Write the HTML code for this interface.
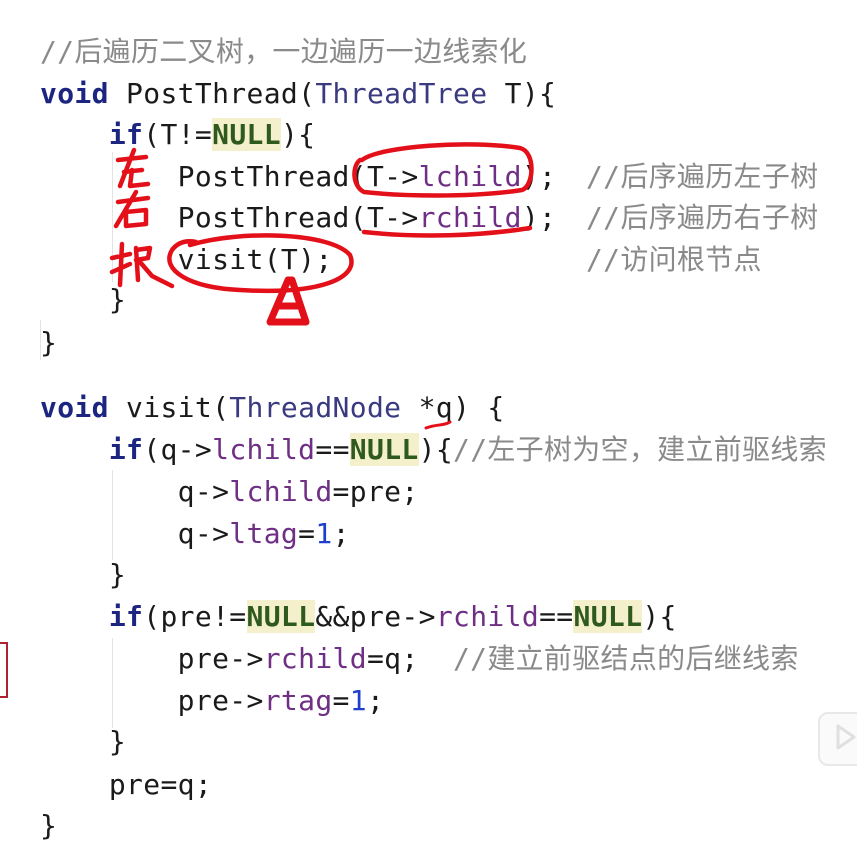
<!DOCTYPE html>
<html><head><meta charset="utf-8"><style>
html,body{margin:0;padding:0;background:#fff;width:857px;height:857px;overflow:hidden;position:relative}
.l{position:absolute;left:40px;height:42px;line-height:42px;font-family:"DejaVu Sans Mono","Liberation Mono","Noto Sans CJK SC",monospace;font-size:28px;color:#1a1a1a;white-space:pre;letter-spacing:0.35px}
.k{color:#1c2580;font-weight:bold}
.t{color:#3a3a80}
.f{color:#6e2f84}
.n{color:#2f5a1e;font-weight:bold;background:#f4f0cc}
.d{color:#1d3fcc}
.c{color:#8a8a8a;font-family:"DejaVu Sans Mono","Noto Sans CJK SC",monospace;letter-spacing:0.3px}
.g{position:absolute;width:1px;background:#e4e4e4}
</style></head><body>
<div class="g" style="left:112px;top:152px;height:130px"></div>
<div class="g" style="left:112px;top:470px;height:90px"></div>
<div class="g" style="left:112px;top:638px;height:90px"></div>
<div class="g" style="left:40px;top:320px;height:40px"></div>

<div class="l c" style="top:31px">//后遍历二叉树，一边遍历一边线索化</div>
<div class="l" style="top:73px"><span class="k">void</span> PostThread(<span class="t">ThreadTree</span> T){</div>
<div class="l" style="top:114px">    <span class="k">if</span>(T!=<span class="n">NULL</span>){</div>
<div class="l" style="top:156px">        PostThread(T-&gt;<span class="f">lchild</span>);</div>
<div class="l c" style="top:156px;left:586px">//后序遍历左子树</div>
<div class="l" style="top:197px">        PostThread(T-&gt;<span class="f">rchild</span>);</div>
<div class="l c" style="top:197px;left:586px">//后序遍历右子树</div>
<div class="l" style="top:239px">        visit(T);</div>
<div class="l c" style="top:239px;left:586px">//访问根节点</div>
<div class="l" style="top:279px">    }</div>
<div class="l" style="top:322px">}</div>

<div class="l" style="top:387px"><span class="k">void</span> visit(<span class="t">ThreadNode</span> *q) {</div>
<div class="l" style="top:429px">    <span class="k">if</span>(q-&gt;<span class="f">lchild</span>==<span class="n">NULL</span>){<span class="c">//左子树为空，建立前驱线索</span></div>
<div class="l" style="top:471px">        q-&gt;<span class="f">lchild</span>=pre;</div>
<div class="l" style="top:513px">        q-&gt;<span class="f">ltag</span>=<span class="d">1</span>;</div>
<div class="l" style="top:554px">    }</div>
<div class="l" style="top:596px">    <span class="k">if</span>(pre!=<span class="n">NULL</span>&amp;&amp;pre-&gt;<span class="f">rchild</span>==<span class="n">NULL</span>){</div>
<div class="l" style="top:638px">        pre-&gt;<span class="f">rchild</span>=q;  <span class="c">//建立前驱结点的后继线索</span></div>
<div class="l" style="top:680px">        pre-&gt;<span class="f">rtag</span>=<span class="d">1</span>;</div>
<div class="l" style="top:721px">    }</div>
<div class="l" style="top:764px">    pre=q;</div>
<div class="l" style="top:805px">}</div>

<div style="position:absolute;left:-4px;top:642px;width:8px;height:52px;border:2px solid #b02030"></div>
<div style="position:absolute;left:818px;top:712px;width:50px;height:50px;border:2px solid #e8e8e8;border-radius:10px;background:#fafafa"></div>
<svg style="position:absolute;left:836px;top:724px" width="21" height="26"><path d="M2 2 L18 13 L2 24Z" fill="none" stroke="#e0e0e0" stroke-width="3" stroke-linejoin="round"/></svg>

<svg style="position:absolute;left:0;top:0" width="857" height="857" fill="none" stroke="#e3101a" stroke-width="4.5" stroke-linecap="round" stroke-linejoin="round">
<path d="M118 160 L146 157 M134 150 L120 186 M124 172 L142 170 M132 170 L130 186 L148 184"/>
<path d="M118 202 L148 198 M136 192 L116 226 M126 212 L146 210 L146 224 L126 226 Z"/>
<path d="M112 258 L130 254 M122 244 L120 285 M112 272 L130 264 M136 250 L150 248 L148 258 L136 260 M136 248 L138 280 M140 262 L152 276 L172 286"/>
<path d="M362 160 C380 146 470 140 520 148 C536 152 534 186 522 190 C470 198 400 196 364 192 C352 186 352 166 360 160"/>
<path d="M364 232 C420 238 480 236 530 228"/>
<path d="M190 245 C240 230 330 232 350 255 C360 278 320 295 240 290 C190 288 160 270 172 250 C178 242 186 240 196 242"/>
<path d="M288 280 L270 322 L306 322 L292 280 Z M278 306 L300 306" stroke-width="7"/>
<path d="M426 428 C436 424 444 426 450 422" stroke-width="3"/>
</svg>
</body></html>
